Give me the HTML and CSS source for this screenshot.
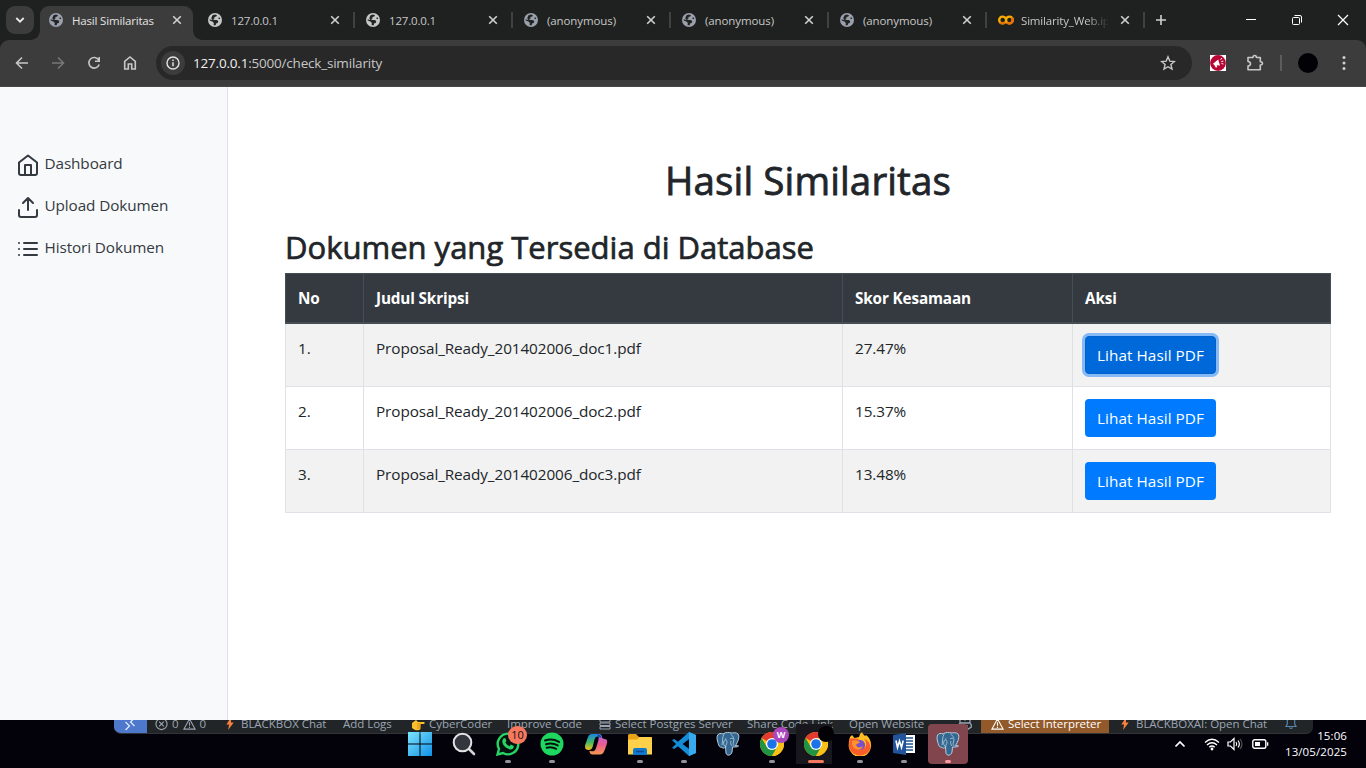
FILE: index.html
```html
<!DOCTYPE html>
<html lang="id">
<head>
<meta charset="utf-8">
<title>Hasil Similaritas</title>
<link rel="stylesheet" href="styles.css">
</head>
<body>
<svg class="defs" aria-hidden="true">
  <symbol id="globe" viewBox="0 0 14 14"><circle cx="7" cy="7" r="7" fill="currentColor"/><path class="land" d="M4.500 2.200 7 1.500 9 2.200 8.300 3.600 6.400 4.100 6.600 5.500 5 6.100 6.300 6.900 8.600 6.900 10.300 8 9.700 10 8 10.500 7.800 12.300 5.600 12.300 5.800 10 4.800 8.700 1.700 7.600 1.600 6.200 4.500 7.200 3.200 5.200ZM11 4 12.200 5.500 11.800 6.300 10.200 5.500Z"/></symbol>
  <symbol id="x" viewBox="0 0 10 10"><path d="M1.200 1.200 8.800 8.800M8.800 1.200 1.200 8.800" stroke="currentColor" stroke-width="1.600" fill="none"/></symbol>
  <symbol id="bolt" viewBox="0 0 10 14"><path d="M6.500 0 1 8h3L3 14l6-8H6Z" fill="#f5813f"/></symbol>
  <symbol id="warn" viewBox="0 0 14 14"><path d="M7 1.500 13 12.500H1ZM7 5v4M7 10v1.400" fill="none" stroke="currentColor" stroke-width="1.200"/></symbol>
  <symbol id="chrome" viewBox="0 0 24 24"><circle cx="12" cy="12" r="12" fill="#fbc116"/><path d="M12 12 1.600 6A12 12 0 0 1 22.400 6Z" fill="#e33b2e"/><path d="M1.600 6A12 12 0 0 0 12 24L17.200 15 12 12 6.800 15Z" fill="#229342"/><path d="M12 6H22.400A12 12 0 0 1 12 24L17.200 15Z" fill="#fbc116"/><circle cx="12" cy="12" r="6" fill="#fff"/><circle cx="12" cy="12" r="4.800" fill="#1a73e8"/></symbol>
  <symbol id="elephant" viewBox="0 0 24 24"><path d="M7 2C2 0 0 4 1.500 9c1 4 2 7 4 6 1 2 3 1 4 0l.5 6c.5 3 5 3 6-1l.5-5c3 0 5 0 6-1-1-.5-2 0-3-.5C22 10 24 4 22 2c-2-2-5-1-7-1-2-1-5-1-8 1Z" fill="#336791" stroke="#b9cfdd" stroke-width="1"/><path d="M8 2.500C6 5 7 9 6 13M10 15c-2-1-3-3-2-6 1-2 3-1 3 1 0 3-2 3-1 5M14.500 2c3 2 4 5 3 8-1 2 0 3 1 4M14 7c1-1 3-1 3 0M9 7h1.500M16 14c-1-1-2-3-1-5" fill="none" stroke="#b9cfdd" stroke-width=".8"/></symbol>
</svg>

<header class="browser">
  <div class="tabstrip">
    <button class="tabsearch"><svg width="10" height="8" viewBox="0 0 10 8"><path d="M1.300 2 5 5.700 8.700 2" fill="none" stroke="#e8e8e8" stroke-width="1.800"/></svg></button>
    <div class="tab active"><svg class="fav grey"><use href="#globe"/></svg><span class="title">Hasil Similaritas</span><svg class="close"><use href="#x"/></svg></div>
    <div class="tab"><svg class="fav"><use href="#globe"/></svg><span class="title">127.0.0.1</span><svg class="close"><use href="#x"/></svg></div>
    <div class="tab"><svg class="fav"><use href="#globe"/></svg><span class="title">127.0.0.1</span><svg class="close"><use href="#x"/></svg></div>
    <div class="tab"><svg class="fav grey"><use href="#globe"/></svg><span class="title anon">(anonymous)</span><svg class="close"><use href="#x"/></svg></div>
    <div class="tab"><svg class="fav grey"><use href="#globe"/></svg><span class="title anon">(anonymous)</span><svg class="close"><use href="#x"/></svg></div>
    <div class="tab"><svg class="fav grey"><use href="#globe"/></svg><span class="title anon">(anonymous)</span><svg class="close"><use href="#x"/></svg></div>
    <div class="tab colab"><svg class="cofav" viewBox="0 0 16 12"><circle cx="4.600" cy="6" r="3.400" fill="none" stroke="#f9ab00" stroke-width="2.400" stroke-dasharray="17.500 4" stroke-dashoffset="-2"/><circle cx="11.400" cy="6" r="3.400" fill="none" stroke="#f9ab00" stroke-width="2.400"/><path d="M9 8.400A3.400 3.400 0 0 0 13.800 3.600M2.200 8.400A3.400 3.400 0 0 0 7 8.400" fill="none" stroke="#e8710a" stroke-width="2.400"/></svg><span class="title fade">Similarity_Web.ipynb</span><svg class="close"><use href="#x"/></svg></div>
    <svg class="plus" viewBox="0 0 12 12"><path d="M6 1v10M1 6h10" stroke="#d0d0d0" stroke-width="1.600"/></svg>
    <div class="winctl">
      <svg viewBox="0 0 12 12"><path d="M1 5.500h10" stroke="#fff"/></svg>
      <svg viewBox="0 0 12 12"><rect x="1.500" y="3.500" width="7" height="7" rx="1" fill="none" stroke="#fff"/><path d="M3.500 1.500H9A1.500 1.500 0 0 1 10.500 3V8.500" fill="none" stroke="#fff"/></svg>
      <svg viewBox="0 0 12 12"><path d="m1 1 10 10M11 1 1 11" stroke="#fff" stroke-width="1.200"/></svg>
    </div>
  </div>
  <div class="toolbar">
    <svg class="nav" viewBox="0 0 16 16"><path d="M14 8H3M8 2.500 2.500 8 8 13.500" /></svg>
    <svg class="nav off" viewBox="0 0 16 16"><path d="M2 8h11M8 2.500 13.500 8 8 13.500"/></svg>
    <svg class="nav" viewBox="0 0 16 16"><path d="M12.700 5A5.300 5.300 0 1 0 13.200 9.500M13.200 2v4.200H9"/></svg>
    <svg class="nav" viewBox="0 0 16 16"><path d="M2.700 14V6.300L8 2l5.300 4.300V14H9.700V9H6.300v5Z"/></svg>
    <div class="omnibox">
      <span class="info"><svg width="14" height="14" viewBox="0 0 14 14"><circle cx="7" cy="7" r="6" fill="none" stroke="#e3e3e3" stroke-width="1.400"/><path d="M7 6.200v4M7 3.500v1.500" stroke="#e3e3e3" stroke-width="1.500"/></svg></span>
      <span class="url"><b>127.0.0.1</b>:5000/check_similarity</span>
      <svg class="star" viewBox="0 0 16 16"><path d="m8 1.800 1.800 4.300 4.600.4-3.500 3 1.100 4.600L8 11.700 4 14.100l1.100-4.600-3.500-3 4.600-.4Z" fill="none" stroke="#c7c7c7" stroke-width="1.400"/></svg>
    </div>
    <svg class="ext" viewBox="0 0 16 16"><path fill="#fff" d="M0 0h16v16H0z"/><circle cx="8" cy="8" r="7.900" fill="#b80735"/><path d="M3 8.800 8.200 4.500 10 10.500 6.800 10.300 7.200 12.300 5.700 12.500 4.700 10.500Z" fill="#fff"/><path d="m10.500 4.800 1.500-1.800M11.300 6.700l2-.6M11.500 8.500l1.900.5" stroke="#fff"/></svg>
    <svg class="puzzle" viewBox="0 0 18 18"><path d="M2 3.500H7C7 .8 10.400.8 10.400 3.500H14.300V7.700C17.200 7.700 17.200 11 14.300 11V15.800H2V12C5.300 11.500 5.300 7.900 2 7.500Z" fill="none" stroke="#c7c7c7" stroke-width="1.600" stroke-linejoin="round"/></svg>
    <i class="vsep"></i><i class="avatar"></i>
    <svg class="dots" viewBox="0 0 4 16"><g fill="#d0d0d0"><circle cx="2" cy="2.500" r="1.500"/><circle cx="2" cy="8" r="1.500"/><circle cx="2" cy="13.500" r="1.500"/></g></svg>
  </div>
</header>

<div class="page">
  <nav class="sidebar">
    <a><svg viewBox="0 0 24 24"><path d="M3 9.500 12 2.500 21 9.500V20a2 2 0 0 1-2 2H5a2 2 0 0 1-2-2ZM9 22V12h6v10"/></svg><span>Dashboard</span></a>
    <a><svg viewBox="0 0 24 24"><path d="M3 15v5a2 2 0 0 0 2 2h14a2 2 0 0 0 2-2v-5M17 8l-5-5-5 5M12 3v12"/></svg><span>Upload Dokumen</span></a>
    <a><svg viewBox="0 0 24 24"><path d="M8 6h13M8 12h13M8 18h13M3 6h.01M3 12h.01M3 18h.01"/></svg><span>Histori Dokumen</span></a>
  </nav>
  <main>
    <h1>Hasil Similaritas</h1>
    <h2>Dokumen yang Tersedia di Database</h2>
    <table>
      <colgroup><col class="c1"><col class="c2"><col class="c3"><col class="c4"></colgroup>
      <thead><tr><th>No</th><th>Judul Skripsi</th><th>Skor Kesamaan</th><th>Aksi</th></tr></thead>
      <tbody>
        <tr><td>1.</td><td>Proposal_Ready_201402006_doc1.pdf</td><td>27.47%</td><td><a class="btn focus">Lihat Hasil PDF</a></td></tr>
        <tr><td>2.</td><td>Proposal_Ready_201402006_doc2.pdf</td><td>15.37%</td><td><a class="btn">Lihat Hasil PDF</a></td></tr>
        <tr><td>3.</td><td>Proposal_Ready_201402006_doc3.pdf</td><td>13.48%</td><td><a class="btn">Lihat Hasil PDF</a></td></tr>
      </tbody>
    </table>
  </main>
</div>

<footer class="taskbar">
  <div class="status">
    <span class="remote"><svg width="12" height="14" viewBox="0 0 12 14"><path d="m1.500 5 4 4-4 4M10.500 1l-4 4 4 4" fill="none" stroke="#dfe8ff" stroke-width="1.300"/></svg></span>
    <span class="problems"><svg width="13" height="14" viewBox="0 0 14 14"><circle cx="7" cy="7" r="6" fill="none" stroke="currentColor" stroke-width="1.200"/><path d="m4.500 4.500 5 5m0-5-5 5" stroke="currentColor" stroke-width="1.200"/></svg>0<svg width="13" height="14"><use href="#warn"/></svg>0</span>
    <span class="i1"><svg width="10" height="13"><use href="#bolt"/></svg>BLACKBOX Chat</span>
    <span class="i2">Add Logs</span>
    <span class="i3"><svg width="14" height="14" viewBox="0 -2 14 14"><path d="M1 4 5 1l2 2h6q1.500 1 0 2H9.500v5Q8 12 4 11L1 9Z" fill="#fbc02d"/><path d="M6 5h4M6 7h3.500M6 9h3" stroke="#e08d12"/></svg>CyberCoder</span>
    <span class="i4">Improve Code</span>
    <span class="i5"><svg width="12" height="14" viewBox="0 -2 12 14"><path d="M1 .500h10v2.500H1zM1 4h10v2.500H1zM1 7.500h10V10H1z" fill="none" stroke="currentColor"/></svg>Select Postgres Server</span>
    <span class="i6">Share Code Link</span>
    <span class="i7">Open Website</span>
    <span class="i8"><svg width="14" height="14" viewBox="0 0 14 14"><path d="M2 6V3q0-1 1-1h3l1 1 1-1h3q1 0 1 1v3l1.300 2v2Q11 12.500 7 12.500T.7 10V8ZM2 6h10M5 8v2.500M9 8v2.500" fill="none" stroke="currentColor" stroke-width="1.300"/></svg></span>
    <span class="interp"><svg width="13" height="14"><use href="#warn"/></svg>Select Interpreter</span>
    <span class="i9"><svg width="10" height="13"><use href="#bolt"/></svg>BLACKBOXAI: Open Chat</span>
    <svg class="bell" viewBox="0 0 12 14"><path d="M1 10.500 2.300 8V5a3.700 3.700 0 0 1 7.400 0v3L11 10.500ZM4.500 11.500q1.500 2 3 0" fill="none" stroke="currentColor" stroke-width="1.200"/></svg>
  </div>
  <div class="apps">
    <div class="app"><svg viewBox="0 0 24 24"><defs><linearGradient id="w" x2="1" y2="1"><stop stop-color="#7de4fc"/><stop offset="1" stop-color="#1091e8"/></linearGradient></defs><path d="M0 0h11.500v11.500H0zM12.500 0H24v11.500H12.500zM0 12.500h11.500V24H0zM12.500 12.500H24V24H12.500z" fill="url(#w)"/></svg></div>
    <div class="app"><svg viewBox="0 0 24 24"><path d="m17 17 5 5" stroke="#d2d2d5" stroke-width="2.600" stroke-linecap="round"/><circle cx="10.500" cy="10.500" r="8.800" fill="#34363e" stroke="#e3e3e5" stroke-width="2"/></svg></div>
    <div class="app run"><svg viewBox="0 0 24 24"><path d="M1.500 22.500 3 17A10.300 10.300 0 1 1 7 21Z" fill="#06120c" stroke="#25d366" stroke-width="2.400"/><path d="M7.300 6.500q1.500-1.300 2.300.300l.8 2.100-1 1.500q1.500 2.700 4 3.800l1.500-1.600 2.900 1.500c.3 2.500-2 3.600-3.600 3.300C9.500 16.400 6.200 12.500 6.200 9Z" fill="#25d366"/></svg><b class="count">10</b></div>
    <div class="app run"><svg viewBox="0 0 24 24"><circle cx="12" cy="12" r="11.500" fill="#1ed760"/><path d="M5 8.500q7.500-2.300 14 1.400M6 12.200q6.300-1.800 11.700 1.200M6.600 15.700q5-1.500 9.600 1.100" fill="none" stroke="#06120c" stroke-width="2" stroke-linecap="round"/></svg></div>
    <div class="app"><svg viewBox="0 0 24 24"><defs><linearGradient id="p1" x2="0" y2="1"><stop stop-color="#1687e0"/><stop offset=".5" stop-color="#3fb768"/><stop offset="1" stop-color="#f6c516"/></linearGradient><linearGradient id="p2" x2="0" y2="1"><stop stop-color="#b16aea"/><stop offset=".5" stop-color="#ec5a91"/><stop offset="1" stop-color="#f69850"/></linearGradient></defs><path d="M8 2h7q2.500 0 3 3l-5-.500q-2 .500-2.500 3L8.600 15q-1 3-4 3C1 18 .500 15 1.500 12L4 5q1-3 4-3Z" fill="url(#p1)"/><path d="M14 2q3 0 3.700 3 .8 2 2.800 2c3.300 0 3 3.500 2 6l-2 5.500q-1.300 4-4.500 4H8.500q-2.500 0-3.200-3.500l4 .2q2-.7 2.700-3L14.500 8q.8-3-.5-6Z" fill="url(#p2)"/><path d="M13.500 2q3 0 4 3.500H14Z" fill="#174caa"/></svg></div>
    <div class="app run"><svg viewBox="0 0 24 24"><path d="M0 3.500Q0 2 1.500 2H8l3 3h13v4H0Z" fill="#e8a317"/><path d="M0 7.500h9L11.500 5H22q2 0 2 2v15.500H0Z" fill="#ffd04a"/><path d="M5 23v-5q0-2 2-2h10q2 0 2 2v5Z" fill="#0f78cf"/><path d="M8 19.500h8" stroke="#0a4c8c" stroke-width="1.500"/></svg></div>
    <div class="app run"><svg viewBox="0 0 24 24"><path d="M17 0 24 3v18l-7 3L6 14.200 2.300 17 0 15.800 4.100 12 0 8.200 2.300 7 6 9.800ZM17.800 6.500 10.500 12l7.300 5.500Z" fill="#168bd8" fill-rule="evenodd"/><path d="m17 0 7 3v18l-7 3Z" fill="#37a9ed"/></svg></div>
    <div class="app"><svg viewBox="0 0 24 24"><use href="#elephant"/></svg></div>
    <div class="app run"><svg viewBox="0 0 24 24"><use href="#chrome"/></svg><b class="profile">W</b></div>
    <div class="app run current"><svg viewBox="0 0 24 24"><use href="#chrome"/></svg><i class="blackdot"></i></div>
    <div class="app run"><svg viewBox="0 0 24 24"><path d="M2 5 4 3l2.500 3L11 5q0-3 3-5 .5 2 3 4l1-1c4 3 5.500 7 5 12a11.200 11.200 0 0 1-22.300-.500Q.500 9 2 5Z" fill="#ffbd24"/><path d="M1.500 7Q4 6 6.500 6.500L11 7 9 10q-2 .500-2 3 2 5 8 3.500c4-1.500 4-6.500 1-9.500 6 2 8 8 5 12-5 7-17 6-20-4Z" fill="#fb5d2a"/><circle cx="12" cy="13" r="5.100" fill="#7950ca"/><path d="M4 9c4-1 6 0 8 1-1 2-3 1-4 3 1 3 5 3 7 1-1 5-9 5-11-1Z" fill="#ff922c"/></svg></div>
    <div class="app run"><svg viewBox="0 0 24 24"><path d="M12 3h11v18H12z" fill="#fff"/><path d="M14 6h7M14 9h7M14 12h7M14 15h7M14 18h7" stroke="#1e5295" stroke-width="1.300"/><path d="M1 3 14 1v22L1 21Z" fill="#21549b"/><path d="m4 8.500 1.500 7 2-6.500 2 6.500 1.700-7" fill="none" stroke="#fff" stroke-width="1.600"/></svg></div>
    <div class="app run alert"><svg viewBox="0 0 24 24"><use href="#elephant"/></svg></div>
  </div>
  <div class="tray">
    <svg class="chev" viewBox="0 0 12 8"><path d="M1.500 6.500 6 2l4.500 4.500" fill="none" stroke="#fff" stroke-width="1.700"/></svg>
    <svg class="wifi" viewBox="0 0 16 14"><path d="M1 5.500q7-6.500 14 0M3 8q5-4.500 10 0M5.300 10.300q2.700-2.500 5.400 0" fill="none" stroke="#fff" stroke-width="1.400"/><circle cx="8" cy="12" r="1.400" fill="#fff"/></svg>
    <svg class="vol" viewBox="0 0 16 14"><path d="M1 5h2.500L7 1.500v11L3.500 9H1Z" fill="none" stroke="#fff" stroke-width="1.200"/><path d="M9 5q1.500 2 0 4M11 3.500q2.700 3.500 0 7" fill="none" stroke="#fff" stroke-width="1.200"/><path d="M13 2q4 5 0 10" fill="none" stroke="#555" stroke-width="1.200"/></svg>
    <svg class="bat" viewBox="0 0 17 10"><rect x=".8" y=".8" width="13" height="8.400" rx="1.800" fill="none" stroke="#fff" stroke-width="1.400"/><path d="M3 3h5v4H3zM15 3.300h1.300v3.400H15z" fill="#fff"/></svg>
    <div class="clock"><span>15:06</span><span>13/05/2025</span></div>
  </div>
</footer>
</body>
</html>
```
FILE: styles.css
```css
* { box-sizing: border-box; }
body { margin: 0; width: 1366px; height: 768px; overflow: hidden; display: flex; flex-direction: column; font-family: "Open Sans", "Noto Sans", sans-serif; background: #fff; }
svg { flex: none; display: block; }
.defs { position: absolute; width: 0; height: 0; }

.browser { height: 87px; flex: none; background: #1f2120; }
.tabstrip { height: 40px; display: flex; align-items: center; padding-left: 6px; }
.tabsearch { width: 28px; height: 28px; border: 0; border-radius: 9px; background: #3c3c3c; display: flex; align-items: center; justify-content: center; padding: 0; margin-right: 6px; }
.tab { width: 158px; height: 16px; padding-left: 11px; padding-right: 13px; display: flex; align-items: center; border-right: 2px solid #404242; color: #c7c7c7; }
.tab.active { width: 153px; height: 34px; margin: 6px 4px 0 0; padding: 0 11px 6px 9px; border: 0; border-radius: 9px 9px 0 0; background: #3c3c3c; color: #e3e3e3; position: relative; }
.tab.active::before, .tab.active::after { content: ""; position: absolute; bottom: 0; width: 9px; height: 9px; }
.tab.active::before { left: -9px; background: radial-gradient(circle at 0 0, transparent 8.500px, #3c3c3c 9px); }
.tab.active::after { right: -9px; background: radial-gradient(circle at 100% 0, transparent 8.500px, #3c3c3c 9px); }
.fav { width: 14px; height: 14px; margin-right: 9px; color: #c7c7c7; }
.fav.grey { color: #9aa0ac; }
.land { fill: #232525; }
.close { width: 10px; height: 10px; color: #d0d0d0; }
.title { flex: 1; font-size: 11.500px; line-height: 16px; padding-top: 1px; white-space: nowrap; letter-spacing: -.17px; }
.anon { letter-spacing: -.1px; }
.cofav { width: 16px; height: 12px; margin-right: 7px; }
.colab { padding-right: 14px; }
.fade { flex: none; width: 87px; overflow: hidden; margin-right: 12px; -webkit-mask-image: linear-gradient(90deg, #000 65px, transparent 88px); mask-image: linear-gradient(90deg, #000 65px, transparent 88px); }
.plus { width: 12px; height: 12px; margin-left: 10px; }
.winctl { margin-left: auto; margin-right: 17px; display: flex; gap: 34px; }
.winctl svg { width: 12px; height: 12px; }

.toolbar { height: 47px; background: #3c3c3c; border-radius: 9px 9px 0 0; display: flex; align-items: center; padding-left: 14px; border-bottom: 1px solid #484848; }
.nav { width: 16px; height: 16px; margin-right: 20px; fill: none; stroke: #c7c7c7; stroke-width: 1.600; }
.nav.off { stroke: #777; }
.omnibox { width: 1036px; height: 34px; margin-left: -2px; border-radius: 17px; background: #282828; display: flex; align-items: center; padding: 0 16px 0 5px; }
.info { width: 24px; height: 24px; border-radius: 12px; background: #3c3c3c; display: flex; align-items: center; justify-content: center; margin-right: 8px; }
.url { flex: 1; font-size: 13.500px; color: #c7c7c7; letter-spacing: -.2px; }
.url b { color: #f1f1f1; font-weight: 400; }
.star { width: 16px; height: 16px; }
.ext { width: 16px; height: 16px; margin-left: 18px; }
.puzzle { width: 18px; height: 18px; margin-left: 20px; }
.vsep { width: 2px; height: 16px; background: #5c5c5c; margin-left: 16px; }
.avatar { width: 20px; height: 20px; border-radius: 50%; background: #020106; margin-left: 16px; }
.dots { width: 4px; height: 16px; margin-left: 24px; }

.page { height: 633px; flex: none; display: flex; }
.sidebar { width: 228px; background: #f8f9fb; border-right: 1px solid #dee2e6; padding: 66px 16px 0; display: flex; flex-direction: column; gap: 18px; }
.sidebar a { height: 24px; display: flex; gap: 4.500px; font-size: 15.300px; line-height: 21px; color: #343a40; letter-spacing: -.1px; }
.sidebar svg { width: 24px; height: 24px; fill: none; stroke: #343a40; stroke-width: 2; stroke-linecap: round; stroke-linejoin: round; }
main { width: 1103px; padding: 70px 0 0 57px; color: #212529; }
h1 { margin: 0; font-size: 38.500px; line-height: 47px; font-weight: 500; text-align: center; letter-spacing: .12px; -webkit-text-stroke: .8px #212529; }
h2 { margin: 24px 0 6px; font-size: 31px; line-height: 39px; font-weight: 500; letter-spacing: 0; -webkit-text-stroke: .7px #212529; }
table { width: 1046px; table-layout: fixed; border-collapse: collapse; font-size: 15.300px; line-height: 24px; }
.c1 { width: 78px; } .c2 { width: 479px; } .c3 { width: 230px; }
th { text-align: left; padding: 12px 12px 11px; background: #343a40; color: #fff; border: 1px solid #454d55; border-bottom-width: 2px; font-weight: 700; letter-spacing: -.15px; height: 49px; }
td { height: 63px; padding: 12px; border: 1px solid #dee2e6; vertical-align: top; letter-spacing: -.09px; }
tbody tr:nth-child(odd) { background: #f2f2f2; }
.btn { display: block; width: 131px; height: 38px; line-height: 38px; border-radius: 4px; background: #007bff; color: #fff; text-align: center; white-space: nowrap; letter-spacing: .05px; }
.btn.focus { background: #0069d9; border: 1px solid #0062cc; line-height: 36px; box-shadow: 0 0 0 3px #86baf7; }

.taskbar { height: 48px; flex: none; position: relative; background: #03020b; }
.status { position: absolute; left: 114px; top: 0; width: 1199px; height: 14px; overflow: hidden; display: flex; background: #212527; border-bottom: 1px solid #303437; border-radius: 0 0 7px 7px; color: #9da5b4; font-size: 11.500px; line-height: 14px; white-space: nowrap; letter-spacing: -.03px; }
.status span { display: flex; gap: 4px; flex: none; height: 22px; margin-top: -3px; }
.status .remote { width: 33px; margin-top: 0; padding: 0 0 0 10px; background: #4d78cc; }
.status .remote svg { margin-top: -3px; }
.problems { width: 77px; padding-left: 8px; }
.status .i1 { gap: 6px; }
.i1 { width: 119px; padding-left: 1px; } .i2 { width: 68px; } .i3 { width: 96px; } .i4 { width: 92px; }
.i5 { width: 148px; } .i6 { width: 102px; } .i7 { width: 109px; } .i8 { width: 23px; }
.status .interp { width: 128px; margin-top: 0; padding-left: 10px; background: #925a2a; color: #fff; line-height: 8px; gap: 4px; }
.interp svg { margin-top: -3px; }
.i9 { width: 164px; padding-left: 11px; }
.status .i9 { gap: 6px; }
.bell { width: 12px; height: 14px; margin: -4px 0 0 12px; color: #5584ad; }

.apps { position: absolute; left: 398px; top: 4px; display: flex; }
.app { width: 44px; height: 40px; position: relative; display: flex; justify-content: center; padding-top: 8px; }
.app svg { width: 24px; height: 24px; }
.app.run::after { content: ""; position: absolute; bottom: 1px; left: 19px; width: 6px; height: 3px; border-radius: 2px; background: #93939a; }
.count { position: absolute; left: 22px; top: 2px; width: 19px; height: 18px; border-radius: 9px; background: #f5785f; color: #111; font-size: 11px; line-height: 17px; font-weight: 400; text-align: center; }
.profile { position: absolute; left: 23px; top: 3px; width: 16px; height: 16px; border-radius: 50%; background: #ab47bc; color: #fff; font-size: 9px; line-height: 16px; text-align: center; }
.current { background: linear-gradient(#17171d, #17171d) 2px 0 / 36px 40px no-repeat; }
.app.current::after { left: 14px; width: 16px; background: #f5785f; }
.blackdot { position: absolute; left: 24px; top: 2px; width: 16px; height: 16px; border-radius: 50%; background: #020106; }
.alert::before { content: ""; position: absolute; left: 2px; top: 0; width: 40px; height: 40px; border-radius: 4px; background: #81454d; }
.alert svg { position: relative; }
.app.alert::after { background: #fb9aa7; }
.tray { position: absolute; right: 19px; top: 8px; display: flex; align-items: center; height: 32px; }
.chev { width: 12px; height: 8px; margin-right: 18px; }
.wifi { width: 16px; height: 14px; margin-right: 7px; }
.vol { width: 16px; height: 14px; margin-right: 9px; }
.bat { width: 17px; height: 10px; margin-right: 16px; }
.clock { display: flex; flex-direction: column; align-items: flex-end; font-size: 11.500px; line-height: 16px; color: #fff; letter-spacing: .1px; }
```
